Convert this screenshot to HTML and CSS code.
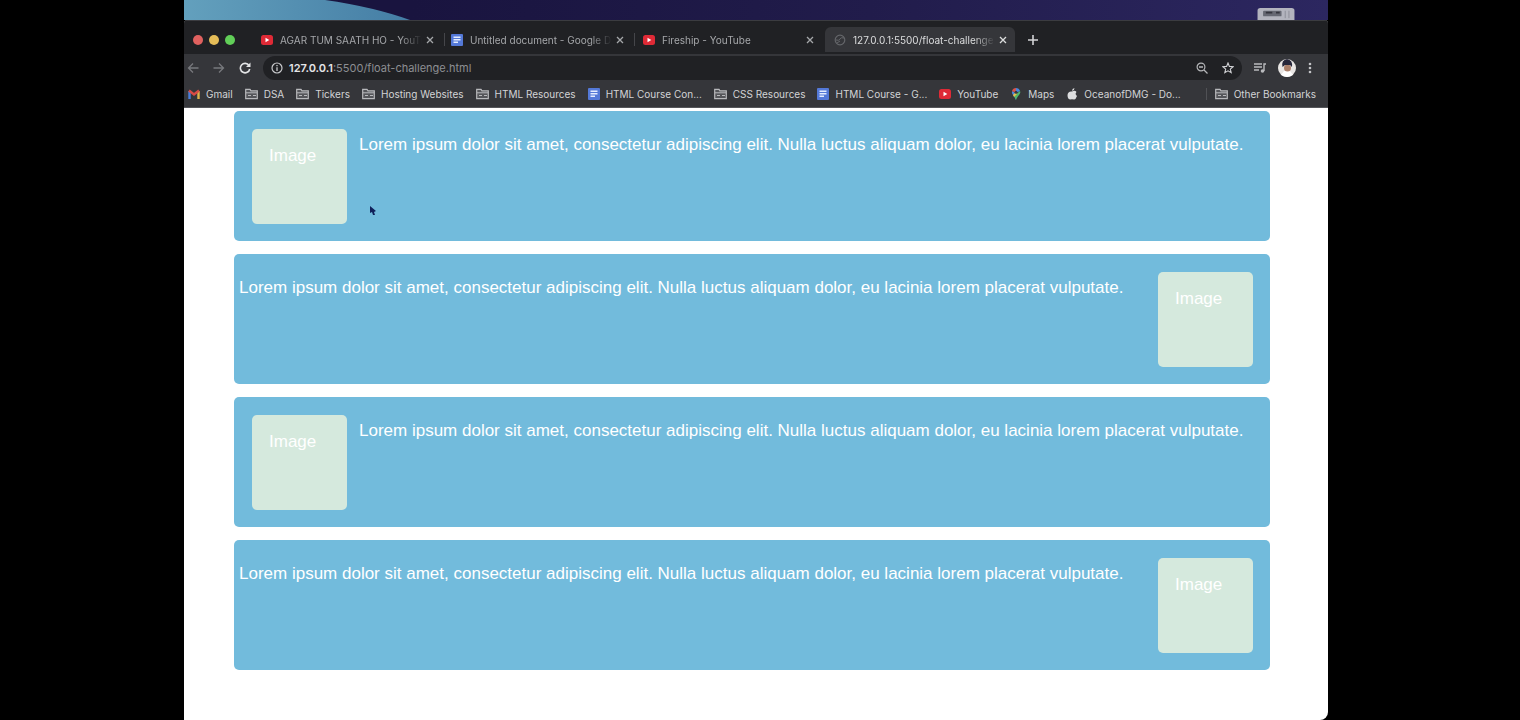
FILE: index.html
```html
<!DOCTYPE html>
<html lang="en">
<head>
<meta charset="utf-8">
<title>Float challenge</title>
<link rel="stylesheet" href="styles.css">
</head>
<body>
<svg class="defs" aria-hidden="true">
  <symbol id="yt" viewBox="0 0 12 12"><rect y="1" width="12" height="10" rx="2.5" fill="#df2a36"/><path d="M4.5 3.7 8.3 6 4.5 8.3z" fill="#fff"/></symbol>
  <symbol id="doc" viewBox="0 0 12 12"><rect width="12" height="12" rx="1" fill="#5479d8"/><path d="M2.5 3.2h7M2.5 5.7h7M2.5 8.2h4.5" stroke="#e4edff" stroke-width="1.5"/></symbol>
  <symbol id="folder" viewBox="0 0 13 12"><path d="M.7 10.700V1.300h4.300l1 1.500h6.300v7.900z" fill="#55565a" stroke="#b8b9bc" stroke-width="1.2"/><path d="M1 4.8h11M3 7.500h3M8 7.500h3" stroke="#b8b9bc"/></symbol>
  <symbol id="x" viewBox="0 0 8 8"><path d="m1 1 6 6M7 1 1 7" stroke="currentColor" stroke-width="1.3"/></symbol>
</svg>
<div class="desktop">
  <div class="wallpaper">
    <svg class="wave" viewBox="0 0 230 20" preserveAspectRatio="none" aria-hidden="true"><defs><linearGradient id="sea"><stop stop-color="#63a0bd"/><stop offset="1" stop-color="#457ea5"/></linearGradient></defs><path d="M0 0H141Q190 7 226 20H0z" fill="url(#sea)"/></svg>
    <svg class="drive" viewBox="0 0 40 13" aria-hidden="true"><path d="M0 13V3Q0 0 3 0H37Q40 0 40 3V13z" fill="#b3b4be"/><rect x="6" y="3" width="20" height="6" rx="1" fill="#666873"/><path d="M9 5h7M20 5h4" stroke="#34353f" stroke-width="2"/><path d="M30 3v8M34 3v8" stroke="#8b8c97"/></svg>
  </div>
  <div class="window">
    <header>
      <div class="tabs">
        <div class="lights"><button class="light red" aria-label="Close window"></button><button class="light yellow" aria-label="Minimize"></button><button class="light green" aria-label="Zoom"></button></div>
        <div class="tab"><svg class="icon"><use href="#yt"/></svg><span class="title">AGAR TUM SAATH HO - YouTu</span><button aria-label="Close tab"><svg class="x"><use href="#x"/></svg></button></div>
        <div class="tab"><svg class="icon"><use href="#doc"/></svg><span class="title">Untitled document - Google D</span><button aria-label="Close tab"><svg class="x"><use href="#x"/></svg></button></div>
        <div class="tab last"><svg class="icon"><use href="#yt"/></svg><span class="title">Fireship - YouTube</span><button aria-label="Close tab"><svg class="x"><use href="#x"/></svg></button></div>
        <div class="tab active"><svg class="icon" viewBox="0 0 12 12"><circle cx="6" cy="6" r="4.8" fill="none" stroke="#64666a" stroke-width="1.2"/><path d="M2 6q3 1 4-1t4-1M3 9l3-2" fill="none" stroke="#64666a"/></svg><span class="title">127.0.0.1:5500/float-challenge</span><button aria-label="Close tab"><svg class="x"><use href="#x"/></svg></button></div>
        <button class="plus" aria-label="New tab"><svg width="10" height="10" viewBox="0 0 10 10"><path d="M5 0v10M0 5h10" stroke="currentColor" stroke-width="1.6"/></svg></button>
      </div>
      <div class="toolbar">
        <div class="history">
          <button aria-label="Back"><svg class="icon" viewBox="0 0 12 12"><path d="M11.500 6H1.500M6 1.500 1.500 6 6 10.500" fill="none" stroke="#77797d" stroke-width="1.300"/></svg></button>
          <button aria-label="Forward"><svg class="icon" viewBox="0 0 12 12"><path d="M.5 6h10M6 1.500 10.500 6 6 10.500" fill="none" stroke="#77797d" stroke-width="1.300"/></svg></button>
          <button aria-label="Reload"><svg class="icon" viewBox="0 0 12 12"><path d="M10 3.500A4.700 4.700 0 1 0 10.700 7" fill="none" stroke="#e3e4e6" stroke-width="1.600"/><path d="M11.500.5V5H7z" fill="#e3e4e6"/></svg></button>
        </div>
        <div class="address">
          <svg class="icon" viewBox="0 0 12 12"><circle cx="6" cy="6" r="5" fill="none" stroke="#c8c9cc" stroke-width="1.200"/><path d="M6 5.200V9M6 3v1.300" stroke="#c8c9cc" stroke-width="1.300"/></svg>
          <a class="url" href="#"><b>127.0.0.1</b>:5500/float-challenge.html</a>
          <button aria-label="Zoom"><svg class="icon" viewBox="0 0 12 12"><circle cx="5" cy="5" r="3.900" fill="none" stroke="#b5b6b9" stroke-width="1.200"/><path d="m8 8 3.500 3.500M3 5h4" stroke="#b5b6b9" stroke-width="1.300"/></svg></button>
          <button aria-label="Bookmark"><svg class="icon" viewBox="0 0 12 12"><path d="m6 1 1.400 3.400 3.700.3-2.800 2.400.9 3.600L6 8.800l-3.200 1.900.9-3.600L.9 4.700l3.700-.3z" fill="none" stroke="#d0d1d4" stroke-width="1.100"/></svg></button>
        </div>
        <button aria-label="Media"><svg class="icon" viewBox="0 0 12 12"><path d="M0 2h8M0 5h8M0 8h5" stroke="#b9babd" stroke-width="1.300"/><path d="M12 2h-2v7" fill="none" stroke="#b9babd" stroke-width="1.400"/><circle cx="8.500" cy="9" r="1.800" fill="#b9babd"/></svg></button>
        <button aria-label="Profile"><svg class="avatar" viewBox="0 0 18 18"><circle cx="9" cy="9" r="9" fill="#e9e6e4"/><path d="M3 16q6 4 12 0l-3-4H6z" fill="#fff"/><circle cx="9.500" cy="9" r="3.500" fill="#a97e69"/><path d="M4.500 8Q3 1 9 0q6 1 5 8l-2-2H7z" fill="#26263a"/></svg></button>
        <button aria-label="Menu"><svg class="dots" viewBox="0 0 4 12"><g fill="#c4c5c8"><circle cx="2" cy="2" r="1.300"/><circle cx="2" cy="6" r="1.300"/><circle cx="2" cy="10" r="1.300"/></g></svg></button>
      </div>
      <nav class="bookmarks">
        <a href="#"><svg class="icon" viewBox="0 0 12 12"><path d="M1.500 11V3" stroke="#4b7fdc" stroke-width="2.400"/><path d="M10.500 11V3" stroke="#dfb24a" stroke-width="2.400"/><path d="m1 2.500 5 4 5-4" fill="none" stroke="#d94a45" stroke-width="2.400"/></svg>Gmail</a>
        <a href="#"><svg class="icon folder"><use href="#folder"/></svg>DSA</a>
        <a href="#"><svg class="icon folder"><use href="#folder"/></svg>Tickers</a>
        <a href="#"><svg class="icon folder"><use href="#folder"/></svg>Hosting Websites</a>
        <a href="#"><svg class="icon folder"><use href="#folder"/></svg>HTML Resources</a>
        <a href="#"><svg class="icon"><use href="#doc"/></svg>HTML Course Con...</a>
        <a href="#"><svg class="icon folder"><use href="#folder"/></svg>CSS Resources</a>
        <a href="#"><svg class="icon"><use href="#doc"/></svg>HTML Course - G...</a>
        <a href="#"><svg class="icon"><use href="#yt"/></svg>YouTube</a>
        <a href="#"><svg class="icon" viewBox="0 0 12 12"><path d="M6 12Q5 9 3 7A4 4 0 0 1 2 3L6 5z" fill="#4a86dc"/><path d="M2 3a4.300 4.300 0 0 1 4-3v5z" fill="#d9534c"/><path d="M6 0a4.300 4.300 0 0 1 4 3L6 5z" fill="#4a86dc"/><path d="M10 3q1 2-1 4-2 2-3 5-1-2-2-4z" fill="#52b66b"/><path d="m3 7 3-3 1 2-3 3z" fill="#e9c04c"/><circle cx="6" cy="4.300" r="1.500" fill="#38393d"/></svg>Maps</a>
        <a href="#"><svg class="icon" viewBox="0 0 12 12"><path d="M6 3.500Q9 2 10.500 4q-2 2 .5 4-1.500 4-3 3.500-2-.7-4 0Q1.500 11 1.500 7 2 3 6 3.500M6 3Q6 .5 8.500 0 8.500 2.500 6 3" fill="#dcdddf"/></svg>OceanofDMG - Do...</a>
        <a class="other" href="#"><svg class="icon folder"><use href="#folder"/></svg>Other Bookmarks</a>
      </nav>
    </header>
    <main>
      <section class="card"><div class="image">Image</div><p>Lorem ipsum dolor sit amet, consectetur adipiscing elit. Nulla luctus aliquam dolor, eu lacinia lorem placerat vulputate.</p></section>
      <section class="card flip"><div class="image">Image</div><p>Lorem ipsum dolor sit amet, consectetur adipiscing elit. Nulla luctus aliquam dolor, eu lacinia lorem placerat vulputate.</p></section>
      <section class="card"><div class="image">Image</div><p>Lorem ipsum dolor sit amet, consectetur adipiscing elit. Nulla luctus aliquam dolor, eu lacinia lorem placerat vulputate.</p></section>
      <section class="card flip"><div class="image">Image</div><p>Lorem ipsum dolor sit amet, consectetur adipiscing elit. Nulla luctus aliquam dolor, eu lacinia lorem placerat vulputate.</p></section>
      <svg class="pointer" viewBox="0 0 6 9" aria-hidden="true"><path d="M0 0 6 5 4 6 5 9 3 9 2 6 0 7z" fill="#10205a"/></svg>
    </main>
  </div>
</div>
</body>
</html>
```
FILE: styles.css
```css
* { box-sizing: border-box; }
body { margin: 0; background: #000; font-family: "Liberation Sans", Arial, sans-serif; }
button { display: flex; align-items: center; padding: 0; border: 0; background: none; color: inherit; }
a { color: inherit; text-decoration: none; }
svg { display: block; flex: none; }
.defs { position: absolute; width: 0; height: 0; }
.icon { width: 12px; height: 12px; }
.folder { width: 13px; }

.desktop { display: flex; flex-direction: column; min-height: 100vh; margin: 0 192px 0 184px; background: #000; }
.wallpaper { display: flex; justify-content: space-between; align-items: flex-end; height: 20px; background: linear-gradient(90deg, #19143f 20%, #211c4b 60%, #2c2760); }
.wave { width: 230px; height: 20px; }
.drive { width: 40px; height: 12px; margin-right: 32px; }

.window { display: flex; flex-direction: column; flex: 1; overflow: hidden; border-radius: 4px 4px 8px 0; background: #fff; }
header { font-family: Inter, sans-serif; font-size: 10px; color: #d3d4d6; background: #35363a; border-bottom: 1px solid #55565a; }

.tabs { display: flex; height: 34px; padding: 6px 0 2px; background: #202124; border-top: 1px solid #3b3c40; }
.lights { display: flex; align-items: center; gap: 6px; width: 71px; padding-left: 9px; }
.light { width: 10px; height: 10px; border-radius: 50%; }
.red { background: #e0615f; }
.yellow { background: #e5bd58; }
.green { background: #61cf58; }
.tab { position: relative; display: flex; align-items: center; flex: 0 1 190px; min-width: 0; padding: 0 11px 0 6px; color: #a5a7aa; }
.tab::after { content: ""; position: absolute; right: 0; top: 6px; bottom: 6px; width: 1px; background: #45464a; }
.tab .title { flex: 1; min-width: 0; margin: 0 4px 0 7px; white-space: nowrap; mask-image: linear-gradient(90deg, #000 85%, transparent); }
.tab.last { padding-left: 8px; }
.tab.active { padding: 0 8px 0 9px; color: #dcddde; background: #35363a; border-radius: 6px 6px 0 0; }
.tab.last::after, .tab.active::after { display: none; }
.x { width: 8px; height: 8px; }
.plus { margin-left: 13px; }

.toolbar { display: flex; align-items: center; gap: 12px; height: 28px; padding: 0 16px 0 3px; }
.history { display: flex; gap: 14px; }
.address { display: flex; align-items: center; gap: 14px; flex: 1; height: 24px; padding: 0 8px; border-radius: 12px; background: #202124; }
.url { flex: 1; margin-left: -8px; font-size: 11px; color: #8d8f93; }
.url b { font-weight: 600; color: #e4e5e7; }
.avatar { width: 18px; height: 18px; }
.dots { width: 4px; height: 12px; }

.bookmarks { display: flex; align-items: center; gap: 12px; height: 25px; padding: 0 12px 2px 4px; white-space: nowrap; }
.bookmarks a { display: flex; align-items: center; gap: 6px; }
.bookmarks .other { margin-left: auto; padding-left: 8px; border-left: 1px solid #505155; }

main { position: relative; display: flex; flex-direction: column; gap: 13px; padding: 3px 58px 50px 50px; color: #fff; font-size: 17px; line-height: 20px; }
.card { display: flex; align-items: flex-start; gap: 12px; min-height: 130px; padding: 18px 13px 17px 18px; border-radius: 5px; background: #72bbdc; }
.card p { margin: 0; padding-top: 6px; }
.image { flex: none; width: 95px; height: 95px; padding: 17px; border-radius: 5px; background: #d5e9dd; }
.flip { flex-direction: row-reverse; justify-content: space-between; padding: 18px 17px 17px 5px; }
.pointer { position: absolute; left: 186px; top: 98px; width: 6px; height: 9px; }
```
